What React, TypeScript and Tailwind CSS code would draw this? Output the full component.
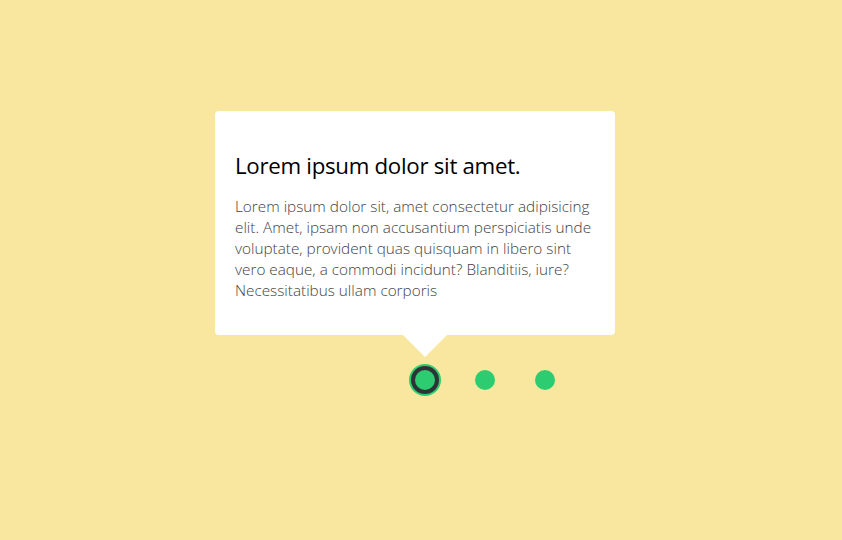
import React, { useState } from "react";

const lines = [
  "Lorem ipsum dolor sit, amet consectetur adipisicing",
  "elit. Amet, ipsam non accusantium perspiciatis unde",
  "voluptate, provident quas quisquam in libero sint",
  "vero eaque, a commodi incidunt? Blanditiis, iure?",
  "Necessitatibus ullam corporis",
];

const App = () => {
  const [active, setActive] = useState(0);

  return (
    <div
      className="w-[842px] h-[540px] bg-[#f9e79f] pt-[111px] pl-[215px]"
      style={{ fontFamily: '"Open Sans", "Liberation Sans", sans-serif' }}
    >
      <div className="w-[400px] flex flex-col items-start">
        <div className="w-[400px] h-[224px] bg-white rounded-[4px] px-5 pt-[39px]">
          <h2 className="text-[22.3px] leading-[32px] text-black font-normal tracking-[-0.3px]">
            Lorem ipsum dolor sit amet.
          </h2>
          <p className="mt-[14px] text-[15.3px] leading-[21px] text-[#3f3f3f] font-light whitespace-nowrap">
            {lines.map((line, i) => (
              <React.Fragment key={i}>
                {line}
                {i < lines.length - 1 && <br />}
              </React.Fragment>
            ))}
          </p>
        </div>
        <div className="ml-[188px] w-0 h-0 border-l-[22px] border-r-[22px] border-t-[22px] border-l-transparent border-r-transparent border-t-white" />
        <div className="ml-[200px] mt-[13px] h-5 flex items-center gap-10">
          {[0, 1, 2].map((i) => (
            <button
              key={i}
              onClick={() => setActive(i)}
              className="relative w-5 h-5 rounded-full bg-[#2ecc71]"
            >
              {i === active && (
                <span className="absolute -left-[6px] -top-[6px] w-[32px] h-[32px] rounded-full bg-[#2ecc71] flex items-center justify-center">
                  <span className="w-[28px] h-[28px] rounded-full border-[4px] border-[#2d3436] bg-[#2ecc71]" />
                </span>
              )}
            </button>
          ))}
        </div>
      </div>
    </div>
  );
};

export default App;
